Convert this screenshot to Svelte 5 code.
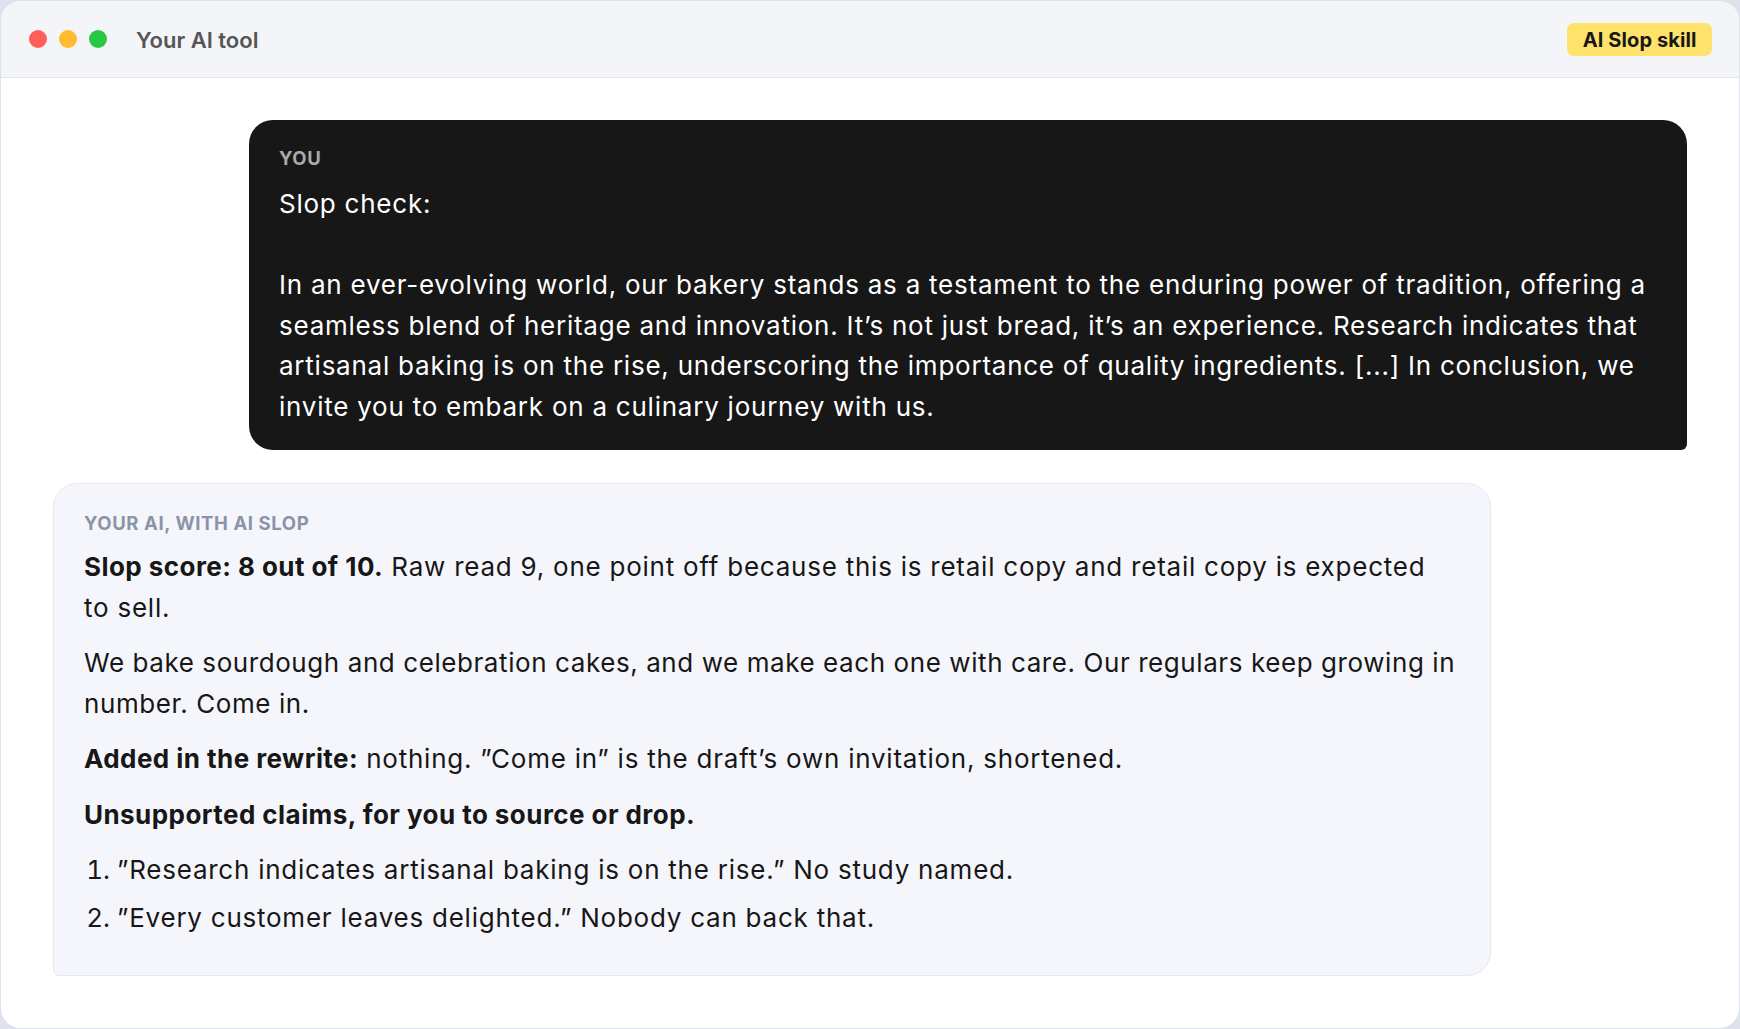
<script>
  const userText = `Slop check:

In an ever-evolving world, our bakery stands as a testament to the enduring power of tradition, offering a
seamless blend of heritage and innovation. It’s not just bread, it’s an experience. Research indicates that
artisanal baking is on the rise, underscoring the importance of quality ingredients. [...] In conclusion, we
invite you to embark on a culinary journey with us.`;

  const claims = [
    '”Research indicates artisanal baking is on the rise.” No study named.',
    '”Every customer leaves delighted.” Nobody can back that.'
  ];
</script>

<div class="window">
  <header class="titlebar">
    <div class="dots">
      <span class="dot red"></span>
      <span class="dot yellow"></span>
      <span class="dot green"></span>
    </div>
    <span class="title">Your AI tool</span>
    <span class="badge">AI Slop skill</span>
  </header>

  <main class="chat">
    <section class="bubble user">
      <div class="label">YOU</div>
      <div class="user-text">{userText}</div>
    </section>

    <section class="bubble ai">
      <div class="label">YOUR AI, WITH AI SLOP</div>
      <p><strong>Slop score: 8 out of 10.</strong> Raw read 9, one point off because this is retail copy and retail copy is expected<br />to sell.</p>
      <p class="snug">We bake sourdough and celebration cakes, and we make each one with care. Our regulars keep growing in<br />number. Come in.</p>
      <p><strong>Added in the rewrite:</strong> nothing. ”Come in” is the draft’s own invitation, shortened.</p>
      <p><strong>Unsupported claims, for you to source or drop.</strong></p>
      <ol>
        {#each claims as claim}
          <li>{claim}</li>
        {/each}
      </ol>
    </section>
  </main>
</div>

<style>
  :global(body) {
    background: #dde2ec;
    font-family: "Inter", "Liberation Sans", sans-serif;
  }

  .window {
    height: 1027px;
    margin: 1px;
    box-sizing: border-box;
    background: #fff;
    border-radius: 20px;
    overflow: hidden;
    display: flex;
    flex-direction: column;
  }

  .titlebar {
    height: 77px;
    box-sizing: border-box;
    display: flex;
    align-items: center;
    padding: 0 27px 0 28px;
    background: #f4f5f9;
    border-bottom: 1px solid #e2e5ee;
  }

  .dots {
    display: flex;
    gap: 12px;
    margin-right: 29px;
  }

  .dot {
    width: 18px;
    height: 18px;
    border-radius: 50%;
  }

  .red { background: #ff5f57; }
  .yellow { background: #febc2e; }
  .green { background: #28c840; }

  .title {
    padding-top: 2px;
    font-size: 22px;
    font-weight: 600;
    color: #555;
  }

  .badge {
    margin-left: auto;
    padding: 6px 15.5px 4px;
    font-size: 20px;
    font-weight: 700;
    line-height: 23px;
    letter-spacing: 0.1px;
    color: #171717;
    background: #ffe26b;
    border-radius: 7px;
  }

  .chat {
    padding: 42px 52px 0;
    display: flex;
    flex-direction: column;
    gap: 33px;
  }

  .bubble {
    width: 1438px;
    box-sizing: border-box;
    font-size: 26px;
    line-height: 40.5px;
    letter-spacing: 0.76px;
  }

  .user {
    align-self: flex-end;
    padding: 24px 30px 23px;
    background: #171717;
    color: #fff;
    border-radius: 24px 24px 6px 24px;
  }

  .user-text {
    white-space: pre-wrap;
  }

  .ai {
    padding: 25px 30px 30px;
    background: #f5f6fb;
    color: #171717;
    border: 1px solid #e6e8f0;
    border-radius: 24px 24px 24px 6px;
  }

  .label {
    font-size: 18.5px;
    line-height: 28px;
    font-weight: 700;
    letter-spacing: 0.6px;
  }

  .user .label {
    margin-bottom: 12px;
    color: #aaa;
  }

  .ai .label {
    margin-bottom: 10px;
    color: #8a94a8;
  }

  p {
    margin: 0 0 15px;
  }

  .snug {
    letter-spacing: 0.58px;
  }

  strong {
    font-weight: 700;
    letter-spacing: 0.44px;
  }

  ol {
    margin: 0;
    padding-left: 33px;
  }

  li {
    margin-bottom: 7px;
  }

  li::marker {
    letter-spacing: 0;
  }
</style>
